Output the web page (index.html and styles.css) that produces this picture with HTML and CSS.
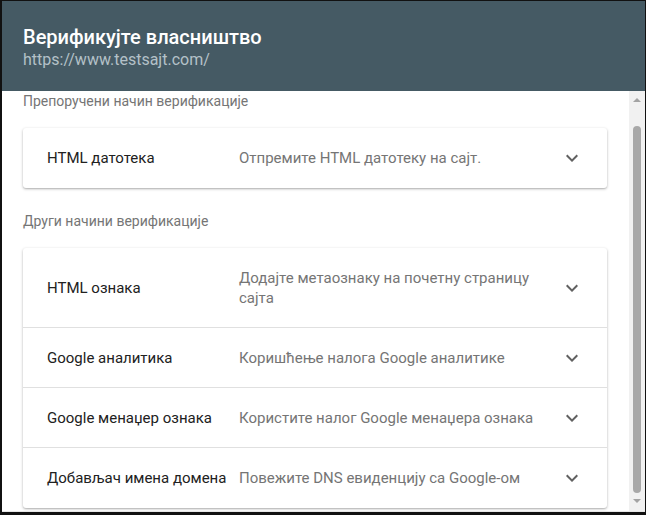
FILE: index.html
```html
<!DOCTYPE html>
<html lang="sr">
<head>
<meta charset="utf-8">
<title>Верификујте власништво</title>
<link rel="stylesheet" href="styles.css">
</head>
<body>
<div class="frame">
  <header class="header">
    <h1 class="title">Верификујте власништво</h1>
    <div class="url">https://www.testsajt.com/</div>
  </header>
  <div class="body">
    <main class="content">
      <div class="section-label">Препоручени начин верификације</div>
      <div class="card">
        <div class="row">
          <div class="name">HTML датотека</div>
          <div class="desc">Отпремите HTML датотеку на сајт.</div>
          <svg class="chev" viewBox="0 2 24 20" width="24" height="20"><path d="M7.41 8.59 12 13.17l4.59-4.58L18 10l-6 6-6-6z"/></svg>
        </div>
      </div>
      <div class="section-label second">Други начини верификације</div>
      <div class="card">
        <div class="row">
          <div class="name">HTML ознака</div>
          <div class="desc">Додајте метаознаку на почетну страницу сајта</div>
          <svg class="chev" viewBox="0 2 24 20" width="24" height="20"><path d="M7.41 8.59 12 13.17l4.59-4.58L18 10l-6 6-6-6z"/></svg>
        </div>
        <div class="row">
          <div class="name">Google аналитика</div>
          <div class="desc">Коришћење налога Google аналитике</div>
          <svg class="chev" viewBox="0 2 24 20" width="24" height="20"><path d="M7.41 8.59 12 13.17l4.59-4.58L18 10l-6 6-6-6z"/></svg>
        </div>
        <div class="row">
          <div class="name">Google менаџер ознака</div>
          <div class="desc">Користите налог Google менаџера ознака</div>
          <svg class="chev" viewBox="0 2 24 20" width="24" height="20"><path d="M7.41 8.59 12 13.17l4.59-4.58L18 10l-6 6-6-6z"/></svg>
        </div>
        <div class="row">
          <div class="name">Добављач имена домена</div>
          <div class="desc">Повежите DNS евиденцију са Google-ом</div>
          <svg class="chev" viewBox="0 2 24 20" width="24" height="20"><path d="M7.41 8.59 12 13.17l4.59-4.58L18 10l-6 6-6-6z"/></svg>
        </div>
      </div>
    </main>
    <div class="scrollbar">
      <div class="arrow up"></div>
      <div class="track"><div class="thumb"></div></div>
      <div class="arrow down"></div>
    </div>
  </div>
</div>
</body>
</html>
```

FILE: styles.css
```css
html, body {
  margin: 0;
  padding: 0;
  background: #fff;
}
body {
  font-family: Roboto, "Liberation Sans", Arial, sans-serif;
}
.frame {
  box-sizing: border-box;
  width: 646px;
  height: 515px;
  border-style: solid;
  border-color: #111;
  border-width: 1px 1px 3px 2px;
  display: flex;
  flex-direction: column;
  overflow: hidden;
  background: #fff;
}
.header {
  background: #455a64;
  height: 90px;
  box-sizing: border-box;
  padding: 24px 21px 0;
  flex: none;
}
.title {
  margin: 0;
  font-size: 20px;
  line-height: 24px;
  font-weight: 500;
  color: #fff;
}
.url {
  font-size: 16px;
  line-height: 22px;
  color: #b4c1c8;
}
.body {
  flex: 1;
  display: flex;
  min-height: 0;
  border-bottom: 1px solid #e6e6e6;
}
.content {
  flex: 1;
  min-width: 0;
  overflow: hidden;
  padding: 0 22px 0 21px;
}
.section-label {
  font-size: 14px;
  line-height: 20px;
  color: #757575;
  margin-bottom: 17px;
}
.section-label.second {
  margin-top: 23px;
}
.card {
  background: #fff;
  border-radius: 3px;
  box-shadow: 0 1px 3px rgba(0,0,0,0.28), 0 1px 1px rgba(0,0,0,0.08);
}
.row {
  display: grid;
  grid-template-columns: 184px 1fr 24px;
  column-gap: 8px;
  align-items: center;
  padding: 20px 23px 19px 24px;
  border-bottom: 1px solid #e0e0e0;
  font-size: 15px;
  line-height: 20px;
}
.card > .row:last-child {
  border-bottom: none;
  padding-bottom: 20px;
}
.name {
  color: #212121;
  white-space: nowrap;
}
.desc {
  color: #757575;
  padding-right: 12px;
}
.chev {
  fill: #616161;
  display: block;
}
.scrollbar {
  width: 16px;
  flex: none;
  background: #f1f1f1;
  display: flex;
  flex-direction: column;
  align-items: center;
}
.arrow {
  width: 0;
  height: 0;
  border-left: 4px solid transparent;
  border-right: 4px solid transparent;
  flex: none;
}
.arrow.up {
  border-bottom: 4px solid #a3a3a3;
  margin: 7px 0 24px;
}
.arrow.down {
  border-top: 4px solid #a3a3a3;
  margin: 6px 0 8px;
}
.track {
  flex: 1;
  width: 100%;
  display: flex;
  justify-content: center;
}
.thumb {
  width: 8px;
  height: 100%;
  background: #a8a8a8;
  border-radius: 4px;
}
```
